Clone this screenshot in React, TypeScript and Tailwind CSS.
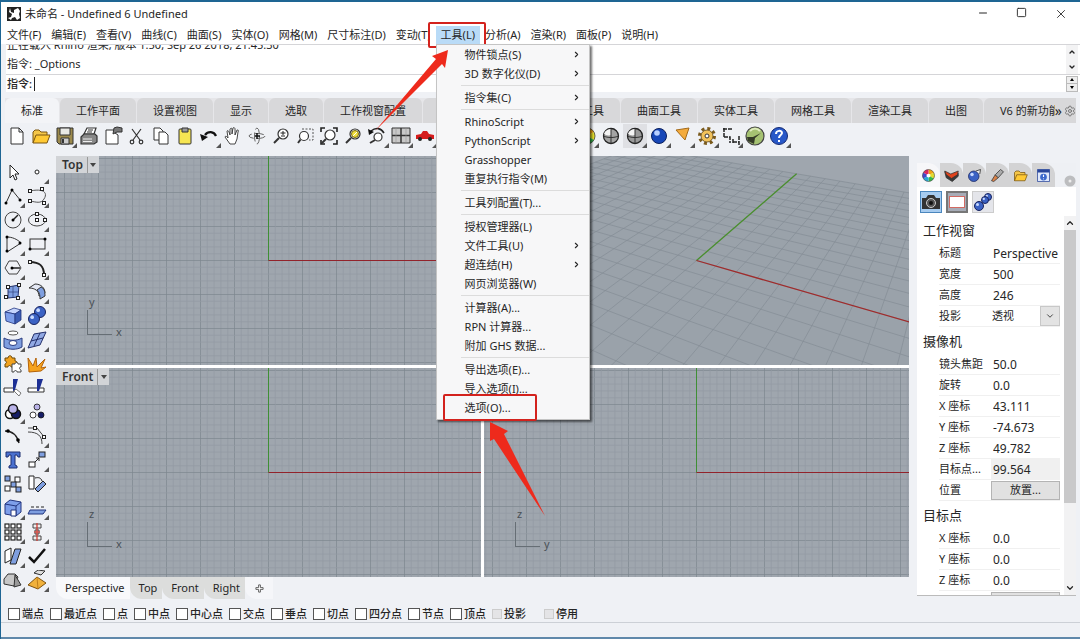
import { useState, type ReactNode } from 'react';
import { ChevronDown, ChevronRight, ChevronUp, Minus, Settings, Square, X } from 'lucide-react';

const INK = '#333';
const BLUE = '#7f9fe0';
const NAVY = '#1c2f94';

/* Small marks shared by the tool icons */
const Dot = ({ x, y }: { x: number; y: number }) => (
  <rect x={x - 1.5} y={y - 1.5} width="3" height="3" fill="#fff" stroke="#222" strokeWidth="1" />
);
const Ball = ({ x, y, r }: { x: number; y: number; r: number }) => (
  <g>
    <circle cx={x} cy={y} r={r} fill="#3b62c4" stroke="#18235e" strokeWidth="1" />
    <circle cx={x - r / 3} cy={y - r / 3} r={r / 3} fill="#c9daff" />
  </g>
);
const Wire = ({ fill }: { fill: string }) => (
  <g>
    <circle cx="10" cy="10" r="7.5" fill={fill} stroke="#222" strokeWidth="1.3" />
    <path d="M3 8c1-4 5-5 7-5v6c-3 1-5 0-7-1z" fill="#f4f4f4" />
    <path d="M2.500 10c4 2 11 2 15 0M10 2.500v15" fill="none" stroke="#333" />
  </g>
);
const Lens = ({ x = 12, y = 8, r = 5 }: { x?: number; y?: number; r?: number }) => (
  <g fill="#fff" stroke={INK}>
    <path d={`M${x - r + 1} ${y + r - 1}L3 17`} strokeWidth="2" />
    <circle cx={x} cy={y} r={r} strokeWidth="1.200" />
  </g>
);

type Tool = { name: string; icon: ReactNode; more?: boolean; on?: boolean };

const fileTools: Tool[] = [
  { name: '新建', icon: <path d="M4 2h8l4 4v12H4zM12 2v4h4" fill="#fff" stroke={INK} /> },
  {
    name: '打开',
    icon: <g stroke="#7a5510"><path d="M2 17V6l2-2h4l2 2h6v3" fill="#f5c648" /><path d="M2 17l3-8h14l-3 8z" fill="#ffc933" /></g>,
  },
  {
    name: '保存',
    more: true,
    icon: <g stroke={INK}><path d="M2 2h16v16H4l-2-2z" fill="#9c8a4d" /><path d="M5 2h10v7H5z" fill="#e8e8e4" /><path d="M6 12h8v6H6z" fill="#ccc" /><path d="M8 13v4" strokeWidth="2" /></g>,
  },
  {
    name: '打印',
    icon: <g stroke={INK} strokeWidth="1.200"><path d="M5 8l3-6h9l-2 6z" fill="#fff" /><path d="M2 11l3-3h11l2 2v6l-3 2H2z" fill="#888" /><path d="M4 13h9M4 15.500h9" stroke="#eee" /><path d="M9 4h5M8 6h5" /></g>,
  },
  { name: '属性', icon: <g stroke={INK}><path d="M3 4h9v3l3 2v9H3z" fill="#fff" /><path d="M11 2l3-1 5 1v4h-5l-4 2z" fill="#777" /></g> },
  { name: '剪切', icon: <g fill="none" stroke={INK} strokeWidth="1.200"><path d="M5 3l8 11M14 3L6 14" /><circle cx="5" cy="16" r="1.800" /><circle cx="14" cy="16" r="1.800" /></g> },
  { name: '复制', icon: <g fill="#fff" stroke={INK}><path d="M3 2h6l3 3v9H3z" /><path d="M8 6h6l3 3v9H8z" /></g> },
  { name: '粘贴', icon: <g stroke={INK}><rect x="4" y="3" width="12" height="15" rx="1" fill="#f7e652" /><path d="M7 2h6v4H7z" fill="#999" /></g> },
  { name: '撤销', more: true, icon: <g><path d="M6 9c3-4 9-4 11 1" fill="none" stroke="#111" strokeWidth="2.200" /><path d="M1 8l2 7 6-4z" fill="#111" /></g> },
  {
    name: '平移',
    icon: <path d="M7 18l-5-7c0-1 2-1 3 1L4 5c1-1 2 0 3 4V3c1-1 2-1 2 0v5l1-6c1-1 2 0 2 1v6l2-5c1 0 2 0 1 2l-1 7-2 5z" fill="#fff" stroke={INK} strokeWidth=".9" />,
  },
  { name: '旋转视图', icon: <g fill="none" stroke="#666"><ellipse cx="10" cy="10" rx="8" ry="2.500" strokeDasharray="9 3" /><ellipse cx="10" cy="10" rx="2.500" ry="8" strokeDasharray="9 3" /><path d="M8 10h5M10 7v6" stroke="#111" strokeWidth="1.500" /></g> },
  { name: '动态缩放', icon: <g><Lens /><path d="M9.500 7h5M12 5v4M10 10h4" stroke="#222" /></g> },
  { name: '框选缩放', icon: <g><Lens x={9} y={10} r={4.500} /><path d="M7 3h11v11h-4" fill="none" stroke="#555" strokeDasharray="2 1.500" /></g> },
  { name: '缩放至最大范围', icon: <g><Lens x={11} y={9} r={5} /><path d="M2 6V2h4M14 2h4v4M18 14v4h-4M6 18H2v-4" fill="none" stroke="#222" strokeWidth="1.600" /></g> },
  { name: '缩放至选取物件', icon: <g><Lens /><circle cx="12" cy="8" r="3.500" fill="#f1df3b" stroke="#7a6b12" /><path d="M10 10l4-4" stroke="#fff" /></g> },
  { name: '复原视图', more: true, icon: <g><Lens x={11} y={11} r={4} /><path d="M4 5c5-4 10-3 13 2" fill="none" stroke="#222" strokeWidth="1.600" /><path d="M1 3l1 6 5-3z" fill="#111" /></g> },
  { name: '四个工作视窗', more: true, icon: <g><path d="M1 2h18v15H1z" fill="#c8c8c8" stroke="#333" /><path d="M10 2v15M1 9.500h18" stroke="#333" strokeWidth="1.500" /><path d="M5 2v15M15 2v15" stroke="#999" strokeWidth=".6" /></g> },
  { name: '右视图', more: true, icon: <g><path d="M1 9l5-1 2-3h4l2 3 5 1v4H1z" fill="#d51c1c" /><circle cx="5" cy="13" r="2" fill="#222" /><circle cx="15" cy="13" r="2" fill="#222" /></g> },
];

const renderTools: Tool[] = [
  { name: '材质', more: true, icon: <ColorWheel /> },
  { name: '着色', icon: <Wire fill="#a4a4a4" /> },
  { name: '线框', more: true, on: true, icon: <Wire fill="#9a9a9a" /> },
  { name: '渲染', more: true, icon: <g><circle cx="10" cy="10" r="7.500" fill="#1747b8" stroke="#0b1f5c" /><circle cx="8" cy="7" r="2.800" fill="#b9d0ff" /></g> },
  { name: '聚光灯', more: true, icon: <path d="M3 4l13-2-4 12z" fill="#f4ab3d" stroke="#a36a1b" /> },
  { name: '选项', more: true, icon: <g><circle cx="10" cy="10" r="7.500" fill="none" stroke="#7a5a1c" strokeWidth="3" strokeDasharray="3 2.900" /><circle cx="10" cy="10" r="6" fill="#f2c25a" stroke="#5c4414" strokeWidth=".8" /><circle cx="10" cy="10" r="2" fill="#fff" stroke="#333" /></g> },
  { name: '尺寸', more: true, icon: <path d="M3 2v9M2 3h9M3 11h6v6M12 16h6M18 10v9M12 13v5" fill="none" stroke="#222" strokeWidth="1.500" strokeDasharray="4 1" /> },
  { name: 'Grasshopper', icon: <g><circle cx="10" cy="10" r="9" fill="#a5c272" stroke="#444" strokeWidth="1.200" /><path d="M2 11l6 0 8-4-6 5-1 6-6-3z" fill="#343b27" /><path d="M5 5c3-3 7-3 10 0" stroke="#e0edbf" strokeWidth="2" fill="none" /></g> },
  { name: '说明', more: true, icon: <g><circle cx="10" cy="10" r="8.500" fill="#2858c8" stroke="#152a72" /><path d="M7 8c0-4 6-4 6-1 0 2-3 2-3 5M10 14v2" stroke="#fff" strokeWidth="2" fill="none" /></g> },
];

const sideTools: Tool[] = [
  { name: '取消选取', icon: <path d="M7 3v13l3-3 2 5 2-1-2-5h4z" fill="#fff" stroke="#222" /> },
  { name: '点', more: true, icon: <circle cx="10" cy="10" r="2" fill="#fff" stroke="#222" /> },
  { name: '多重直线', more: true, icon: <g><path d="M3 17L9 4l9 11" fill="none" stroke="#333" /><circle cx="3" cy="17" r="1.500" /><circle cx="9" cy="4" r="1.500" /><circle cx="17" cy="14" r="1.500" /></g> },
  { name: '控制点曲线', more: true, icon: <g><path d="M3 5c14-3 18 2 14 8-3 5-8 3-14 2" fill="none" stroke="#555" /><Dot x={3} y={5} /><Dot x={15} y={3} /><Dot x={3} y={15} /><Dot x={17} y={17} /></g> },
  { name: '圆', more: true, icon: <g><circle cx="10" cy="10" r="8" fill="none" stroke="#444" /><path d="M10 10l5-5" stroke="#222" strokeWidth="1.500" /><circle cx="10" cy="10" r="1.500" /></g> },
  { name: '椭圆', more: true, icon: <g><ellipse cx="10" cy="10" rx="8.500" ry="6" fill="none" stroke="#444" /><Dot x={10} y={10} /><Dot x={10} y={4} /><Dot x={18} y={10} /></g> },
  { name: '圆弧', more: true, icon: <g><path d="M4 3v15L18 9C14 5 9 3 4 3z" fill="none" stroke="#333" /><circle cx="4" cy="3" r="1.500" /><circle cx="4" cy="17" r="1.500" /><circle cx="17" cy="9" r="1.500" /></g> },
  { name: '矩形', more: true, icon: <g><rect x="3" y="5" width="15" height="10" fill="none" stroke="#333" /><circle cx="3" cy="15" r="1.500" /><circle cx="18" cy="5" r="1.500" /></g> },
  { name: '多边形', more: true, icon: <g><path d="M6 3h8l4 7-4 6H6l-4-6z" fill="none" stroke="#444" /><path d="M9 10h8" stroke="#222" strokeWidth="1.500" /><circle cx="9" cy="10" r="1.500" /></g> },
  { name: '曲线圆角', more: true, icon: <g><path d="M3 4c9 0 14 3 14 13" fill="none" stroke="#222" strokeWidth="2" /><Dot x={3} y={4} /><Dot x={17} y={17} /></g> },
  { name: '曲面', more: true, icon: <g><path d="M5 5l11-2-1 12-10 1z" fill={BLUE} stroke="#26356e" /><path d="M5 10h11M10 4v12" stroke="#26356e" strokeWidth=".6" /><Dot x={5} y={5} /><Dot x={16} y={3} /><Dot x={15} y={16} /><Dot x={3} y={15} /></g> },
  { name: '曲面圆角', more: true, icon: <g stroke="#333"><path d="M2 6l6-4c6 0 10 4 10 9l-6 3c0-5-4-8-10-8z" fill="#e4e8f4" /><path d="M10 8c2 2 3 4 3 9l5-3c0-5-1-8-4-9z" fill={BLUE} /></g> },
  { name: '立方体', more: true, icon: <g stroke="#22357f" strokeWidth=".8"><path d="M2 6l9-4 7 2-6 4z" fill="#c5d5fd" /><path d="M2 6l10 2v10L3 15z" fill="#7d9eea" /><path d="M12 8l6-4v10l-6 4z" fill="#3b5cb3" /></g> },
  { name: '布尔运算联集', more: true, icon: <g><Ball x={13} y={6} r={5.500} /><Ball x={7} y={13} r={5.500} /></g> },
  { name: '投影曲线', more: true, icon: <g stroke="#2a3c80"><ellipse cx="10" cy="3" rx="5" ry="2" fill="#fff" stroke="#555" /><path d="M1 8c5 3 13 3 18 0v9c-5 3-13 3-18 0z" fill={BLUE} /><ellipse cx="10" cy="13" rx="4" ry="2.500" fill="#fff" /></g> },
  { name: '网格', more: true, icon: <g stroke="#24306b"><path d="M7 4l12-2-6 13-12 3z" fill="#91a9e4" /><path d="M4 11l12-3M13 3L7 16" /></g> },
  { name: '组合', icon: <g><path d="M2 4h3c0-3 4-3 4 0h3v3c3 0 3 4 0 4v2H8c0-2-3-2-3 0H2v-3c2-1 2-3 0-3z" fill="#f0a21f" stroke="#6b480b" /><path d="M9 10h3c0-2 3-2 3 0h3v3c-2 0-2 2 0 3v2h-4c0-2-3-2-3 0H9z" fill="#fff" stroke="#444" /></g> },
  { name: '炸开', icon: <path d="M2 18L1 4l5 8 3-8 1 9 8-8-4 9 5-1-5 4z" fill="#f5a21e" stroke="#b4630a" /> },
  { name: '修剪', icon: <g><path d="M1 10h10v4H1z" fill="#fff" stroke="#333" /><path d="M10 1h5l-3 11-2 1z" fill={NAVY} /><path d="M11 13l5 5 2-3-5-4z" fill="#fff" stroke="#777" /></g> },
  { name: '分割', icon: <g><path d="M1 10h16v4H1z" fill="#fff" stroke="#333" /><path d="M10 1h6l-4 12h-2z" fill={NAVY} /></g> },
  { name: '群组', more: true, icon: <g stroke="#111" strokeWidth="1.500"><circle cx="7" cy="12" r="4.500" fill="#fff" /><circle cx="13" cy="12" r="4.500" fill="#161d66" /><circle cx="10" cy="7" r="4.500" fill="#b9b3e8" /></g> },
  { name: '取消群组', icon: <g stroke="#111" strokeWidth=".8"><circle cx="10" cy="5" r="3" fill="#b9b3e8" /><circle cx="6" cy="13" r="3" fill="#fff" /><circle cx="14" cy="13" r="3" fill="#161d66" /></g> },
  { name: '编辑点', icon: <g><path d="M2 5c8 0 12 4 14 12" fill="none" stroke="#222" strokeWidth="1.500" /><circle cx="5" cy="5" r="1.800" /><circle cx="15" cy="14" r="1.800" /></g> },
  { name: '控制点', more: true, icon: <g><path d="M1 6c10 0 14 4 14 12M1 2h9l8 10" fill="none" stroke="#444" /><Dot x={8} y={2} /><Dot x={17} y={11} /></g> },
  { name: '文字', icon: <path d="M3 2h14v5h-2l-1-2h-2v10l2 1v2H6v-2l2-1V5H6L5 7H3z" fill="#4a70cf" stroke="#1d2f70" /> },
  { name: '移动', more: true, icon: <g stroke="#222"><rect x="12" y="2" width="6" height="5" fill={BLUE} /><rect x="2" y="12" width="6" height="5" fill="#fff" /><path d="M8 12l4-4M9 8h3v3" fill="none" /></g> },
  { name: '复制物件', icon: <g stroke="#222"><rect x="2" y="2" width="5" height="5" fill={BLUE} /><rect x="12" y="3" width="5" height="5" fill="#fff" /><rect x="8" y="8" width="5" height="5" fill={BLUE} /><rect x="2" y="12" width="5" height="5" fill="#fff" /><rect x="13" y="13" width="5" height="5" fill={BLUE} /></g> },
  { name: '旋转', icon: <g stroke="#222"><path d="M2 2h5v13H2z" fill="#fff" /><path d="M8 4c4-1 6 0 7 3" fill="none" /><path d="M8 15l8-8 3 3-8 8z" fill={BLUE} /></g> },
  { name: '实体编辑', more: true, icon: <g stroke="#22357f"><path d="M2 6l5-4 11 2v10l-5 4-11-2z" fill="#7d9eea" /><path d="M2 6l11 2v10M13 8l5-4" fill="none" /><path d="M8 12h5v6H8z" fill="#fff" /></g> },
  { name: '平面', more: true, icon: <g><path d="M3 12h16l-3 4H1z" fill={BLUE} stroke="#22357f" /><path d="M4 9h14" stroke="#222" strokeDasharray="3 2" /></g> },
  {
    name: '阵列',
    more: true,
    icon: <g fill="#fff" stroke="#222" strokeWidth="1.200">{[2, 8, 14].map(x => [2, 8, 14].map(y => <rect key={`${x}-${y}`} x={x} y={y} width="4" height="4" />))}</g>,
  },
  { name: '对齐', more: true, icon: <g><g fill="#eee" stroke="#444"><path d="M6 2h8v4H6zM8 8h4v4H8zM6 14h8v4H6z" /></g><path d="M10 1v18M7 10h6" stroke="#d0342c" strokeWidth="1.200" /></g> },
  { name: '变形', more: true, icon: <g stroke="#222"><path d="M2 5l6-3v12l-6 3z" fill="#fff" /><path d="M12 3h6l-5 15H7z" fill={BLUE} /></g> },
  { name: '检查', more: true, icon: <path d="M2 11l5 5L18 3" fill="none" stroke="#111" strokeWidth="2.500" /> },
  { name: '倒角', more: true, icon: <g stroke="#333"><path d="M1 9l4-5h7l3 3-4 9-10-2z" fill="#c7c7c7" /><path d="M12 5l6 10-7 2z" fill="#999" /></g> },
  { name: '渲染工具', more: true, icon: <g><path d="M1 15l9-8 9 6-8 6z" fill="#f1b13b" stroke="#7d5210" /><path d="M10 7l1 12" stroke="#c07f1c" /><path d="M7 3l4-3 7 1-4 4z" fill="#ddd" stroke="#333" /></g> },
];

function ColorWheel() {
  return (
    <g>
      <path d="M10 10L10 2A8 8 0 0 1 17 6z" fill="#f2a313" />
      <path d="M10 10L17 6A8 8 0 0 1 17 14z" fill="#e3dc2b" />
      <path d="M10 10L17 14A8 8 0 0 1 10 18z" fill="#35b84a" />
      <path d="M10 10L10 18A8 8 0 0 1 3 14z" fill="#28a8d8" />
      <path d="M10 10L3 14A8 8 0 0 1 3 6z" fill="#4446c9" />
      <path d="M10 10L3 6A8 8 0 0 1 10 2z" fill="#dc2560" />
      <circle cx="10" cy="10" r="8" fill="none" stroke="#444" strokeWidth=".8" />
      <circle cx="10" cy="10" r="2.500" fill="#fff" />
    </g>
  );
}

function ToolButton({ tool }: { tool: Tool }) {
  return (
    <button aria-label={tool.name} className={`relative flex size-6 items-center justify-center ${tool.on ? 'bg-[#dfe0e4]' : ''}`}>
      <svg viewBox="0 0 20 20" className="size-5">{tool.icon}</svg>
      {tool.more && (
        <svg viewBox="0 0 5 5" className="absolute right-0 bottom-0 size-[5px]"><path d="M5 0v5H0z" fill="#555" /></svg>
      )}
    </button>
  );
}

const menusLeft = ['文件(F)', '编辑(E)', '查看(V)', '曲线(C)', '曲面(S)', '实体(O)', '网格(M)', '尺寸标注(D)', '变动(T)'];
const menusRight = ['分析(A)', '渲染(R)', '面板(P)', '说明(H)'];

const toolsMenu: { label: string; sub?: boolean }[][] = [
  [{ label: '物件锁点(S)', sub: true }, { label: '3D 数字化仪(D)', sub: true }],
  [{ label: '指令集(C)', sub: true }],
  [{ label: 'RhinoScript', sub: true }, { label: 'PythonScript', sub: true }, { label: 'Grasshopper' }, { label: '重复执行指令(M)' }],
  [{ label: '工具列配置(T)...' }],
  [{ label: '授权管理器(L)' }, { label: '文件工具(U)', sub: true }, { label: '超连结(H)', sub: true }, { label: '网页浏览器(W)' }],
  [{ label: '计算器(A)...' }, { label: 'RPN 计算器...' }, { label: '附加 GHS 数据...' }],
  [{ label: '导出选项(E)...' }, { label: '导入选项(I)...' }, { label: '选项(O)...' }],
];

function ToolsMenu() {
  return (
    <div className="absolute top-full left-0 z-20 w-[154px] border border-[#c4c4c4] bg-[#f7f7f8] pb-[2px] shadow-[2px_2px_2px_rgba(0,0,0,0.55)]">
      {toolsMenu.map((group, i) => (
        <div key={i}>
          {i > 0 && <div className="my-[2px] ml-6 h-px bg-[#dcdcdc]" />}
          {group.map(item => (
            <div key={item.label} className="relative">
              <button className="flex h-[19px] w-full items-center justify-between pr-2 pl-7 whitespace-nowrap">
                {item.label}
                {item.sub && <ChevronRight className="size-[9px]" strokeWidth={3} />}
              </button>
              {item.label === '选项(O)...' && (
                <span className="pointer-events-none absolute -inset-y-1 right-[52px] left-[6px] rounded-xs border-2 border-[#d3221d]" />
              )}
            </div>
          ))}
        </div>
      ))}
    </div>
  );
}

/* Orthographic view: 5-unit major lines every 34px, centred on the origin */
function OrthoGrid({ up, across }: { up: string; across: string }) {
  const lines: ReactNode[] = [];
  for (let i = -32; i <= 32; i++) {
    const p = i * 6.8;
    const c = i % 5 === 0 ? '#7d868e' : '#939ba3';
    lines.push(<line key={`v${i}`} x1={p} x2={p} y1="-300" y2="300" stroke={c} strokeWidth=".7" />);
    lines.push(<line key={`h${i}`} y1={p} y2={p} x1="-300" x2="300" stroke={c} strokeWidth=".7" />);
  }
  return (
    <>
      <svg className="absolute inset-0 size-full" aria-hidden="true">
        <svg x="50%" y="50%" className="overflow-visible">
          {lines}
          <path d="M0 0V-600" stroke="#3f8f35" />
          <path d="M0 0H900" stroke="#92232b" />
        </svg>
      </svg>
      <div className="absolute bottom-[22px] left-[31px] text-[#4a5157]">
        <div className="pl-[2px] leading-4">{up}</div>
        <div className="flex items-end gap-1">
          <span className="mb-2 size-[25px] border-b border-l border-[#666e75]" />
          <span className="leading-[22px]">{across}</span>
        </div>
      </div>
    </>
  );
}

/* Camera at (43.111, -74.673, 49.782), looking at the origin with a 50mm lens */
function project(x: number, y: number) {
  const depth = 99.564 - 0.433 * x + 0.75 * y;
  return `${((435 * (0.866 * x + 0.5 * y)) / depth).toFixed(1)} ${((-435 * (-0.25 * x + 0.433 * y)) / depth).toFixed(1)}`;
}

function PerspectiveGrid() {
  const steps = Array.from({ length: 29 }, (_, i) => -70 + i * 5);
  return (
    <svg className="absolute inset-0 size-full" aria-hidden="true">
      <svg x="50%" y="50%" className="overflow-visible">
        <path d={`M${project(-70, -70)}L${project(-70, 70)}L${project(70, 70)}L${project(70, -70)}z`} fill="#9aa2aa" />
        {steps.map(s => (
          <path key={s} d={`M${project(s, -70)}L${project(s, 70)}M${project(-70, s)}L${project(70, s)}`} stroke="#848c95" strokeWidth=".7" />
        ))}
        <path d={`M0 0L${project(0, 70)}`} stroke="#4a8f2e" strokeWidth="1.3" />
        <path d={`M0 0L${project(70, 0)}`} stroke="#a02b2b" strokeWidth="1.3" />
      </svg>
    </svg>
  );
}

function Viewport({ title, children }: { title: string; children: ReactNode }) {
  return (
    <section className="relative overflow-hidden bg-[#9fa6ae]">
      {children}
      <div className="relative inline-flex h-[17px] items-center bg-[#d2d4d7] pl-[6px] text-xs font-semibold text-[#333]">
        {title}
        <button aria-label={`${title} 菜单`} className="ml-1 flex h-4 w-3 items-center justify-center border-l border-[#999]">
          <svg viewBox="0 0 6 4" className="h-1 w-[6px]"><path d="M0 0h6L3 4z" fill="#444" /></svg>
        </button>
      </div>
    </section>
  );
}

type Field = { label: string; value: string; kind?: 'select' | 'button' | 'readonly' };

const properties: { title: string; fields: Field[] }[] = [
  {
    title: '工作视窗',
    fields: [
      { label: '标题', value: 'Perspective' },
      { label: '宽度', value: '500' },
      { label: '高度', value: '246' },
      { label: '投影', value: '透视', kind: 'select' },
    ],
  },
  {
    title: '摄像机',
    fields: [
      { label: '镜头焦距', value: '50.0' },
      { label: '旋转', value: '0.0' },
      { label: 'X 座标', value: '43.111' },
      { label: 'Y 座标', value: '-74.673' },
      { label: 'Z 座标', value: '49.782' },
      { label: '目标点...', value: '99.564', kind: 'readonly' },
      { label: '位置', value: '放置...', kind: 'button' },
    ],
  },
  {
    title: '目标点',
    fields: [
      { label: 'X 座标', value: '0.0' },
      { label: 'Y 座标', value: '0.0' },
      { label: 'Z 座标', value: '0.0' },
    ],
  },
];

function FieldRow({ id, field }: { id: string; field: Field }) {
  return (
    <div className="ml-5 flex h-[21px] items-center border-b border-[#f0f0f0]">
      <label htmlFor={id} className="w-[52px] shrink-0 whitespace-nowrap">{field.label}</label>
      {field.kind === 'select' && (
        <div className="relative h-full min-w-0 flex-1">
          <select id={id} className="h-full w-full appearance-none pl-px outline-none">
            <option>{field.value}</option>
          </select>
          <span className="pointer-events-none absolute inset-y-0 right-0 flex w-5 items-center justify-center border border-[#c8c8c8] bg-[#e3e3e3]">
            <ChevronDown className="size-[10px]" />
          </span>
        </div>
      )}
      {field.kind === 'button' && (
        <button id={id} className="h-[19px] flex-1 border border-[#b4b4b4] bg-[#e1e1e1]">{field.value}</button>
      )}
      {(!field.kind || field.kind === 'readonly') && (
        <input
          id={id}
          defaultValue={field.value}
          readOnly={field.kind === 'readonly'}
          className={`h-full min-w-0 flex-1 pl-[2px] text-xs outline-none ${field.kind === 'readonly' ? 'bg-[#f0f0f0]' : ''}`}
        />
      )}
    </div>
  );
}

const panelTabs: { name: string; icon: ReactNode }[] = [
  { name: '属性', icon: <ColorWheel /> },
  { name: '图层', icon: <g stroke="#333"><path d="M1 5l7 5 11-3v4l-8 7-8-5z" fill="#3a3a3a" /><path d="M1 4l8 4 10-4-1 5-8 5-7-5z" fill="#e0431c" /></g> },
  { name: '渲染', icon: <g><Ball x={9} y={11} r={7} /><path d="M12 4l6-2-1 6" fill="#eee" stroke="#222" /></g> },
  { name: '材质', icon: <g stroke="#333"><path d="M2 17l5-8 4 4-6 5z" fill="#d9824a" /><path d="M7 9l7-7 4 3-7 8z" fill="#aaa" /></g> },
  { name: '文件夹', icon: fileTools[1].icon },
  { name: '说明', icon: <g><path d="M2 2h16v16H2z" fill="#dfe8fb" stroke="#29469b" /><path d="M2 2h16v4H2z" fill="#29469b" /><circle cx="10" cy="12" r="4.500" fill="#3b68cc" /><path d="M10 9v3M10 14v1" stroke="#fff" strokeWidth="1.500" /></g> },
];

function PropertiesPanel() {
  return (
    <aside className="mt-[7px] mr-1 mb-2 ml-2 flex w-[159px] shrink-0 flex-col">
      <div className="flex h-6 shrink-0 items-center bg-[#eef0f4]">
        {panelTabs.map((tab, i) => (
          <button
            key={tab.name}
            aria-label={tab.name}
            className={`flex h-full w-[23px] items-center justify-center rounded-tr-xl ${i === 0 ? 'bg-[#f7f7f9]' : 'bg-[#d3d3d4]'}`}
          >
            <svg viewBox="0 0 20 20" className="size-[15px]">{tab.icon}</svg>
          </button>
        ))}
        <button aria-label="面板选项" className="ml-auto self-end">
          <svg viewBox="0 0 12 12" className="size-3"><circle cx="6" cy="6" r="5.500" fill="#bcbdbf" /><circle cx="6" cy="6" r="1.500" fill="#eee" /></svg>
        </button>
      </div>
      <div className="flex min-h-0 flex-1 flex-col overflow-hidden border-b border-[#bbb] bg-white">
        <div className="flex h-[29px] shrink-0 items-center gap-1 pl-[3px]">
          <button aria-label="摄像机" className="flex size-[22px] items-center justify-center border border-[#4a86bd] bg-[#a6cbef]">
            <svg viewBox="0 0 20 20" className="size-5"><path d="M1 6h4l2-3h6l2 3h4v11H1z" fill="#333" /><circle cx="10" cy="11" r="4.500" fill="#555" stroke="#ccc" /><circle cx="10" cy="11" r="2" fill="#111" /></svg>
          </button>
          <button aria-label="显示" className="flex size-[22px] items-center justify-center border-2 border-[#777] bg-[#a7acb7]">
            <span className="h-3 w-4 border border-[#d26a62] bg-white" />
          </button>
          <button aria-label="材质" className="flex size-[22px] items-center justify-center border border-[#ccc] bg-[#e4e5ea]">
            <svg viewBox="0 0 20 20" className="size-5"><Ball x={15} y={5} r={3.5} /><Ball x={12} y={8} r={3.5} /><Ball x={6} y={14} r={4.5} /></svg>
          </button>
        </div>
        <div className="flex min-h-0 flex-1">
          <div className="min-w-0 flex-1 overflow-hidden pl-[2px]">
            {properties.map((section, s) => (
              <div key={section.title}>
                <h2 className="flex h-[27px] items-center pl-1 text-[13px]">{section.title}</h2>
                {section.fields.map(field => (
                  <FieldRow key={field.label} id={`f${s}-${field.label}`} field={field} />
                ))}
              </div>
            ))}
            <div className="mt-px ml-[72px] h-[19px] border border-[#b4b4b4] bg-[#e1e1e1]" />
          </div>
          <div className="ml-1 flex w-3 flex-col items-center bg-[#f2f2f3]">
            <ChevronUp className="my-[2px] size-[10px] shrink-0" strokeWidth={3} />
            <div className="h-[72%] w-full bg-[#c9c9ca]" />
            <ChevronDown className="mt-auto mb-[2px] size-[10px] shrink-0" strokeWidth={3} />
          </div>
        </div>
      </div>
    </aside>
  );
}

const tabs = ['标准', '工作平面', '设置视图', '显示', '选取', '工作视窗配置', '可见性', '变动', '曲线工具', '曲面工具', '实体工具', '网格工具', '渲染工具', '出图', 'V6 的新功能'];
const snaps = ['端点', '最近点', '点', '中点', '中心点', '交点', '垂点', '切点', '四分点', '节点', '顶点'];

export default function App() {
  const [active, setActive] = useState('标准');
  const [view, setView] = useState('Perspective');

  return (
    <div className="relative flex h-screen flex-col overflow-hidden border-t-2 border-l border-[#1e6593] bg-[#eff1f5] font-['Noto_Sans','Noto_Sans_CJK_SC',sans-serif] text-[11px] leading-4 text-[#262626]">
      {/* Title bar */}
      <header className="flex h-6 shrink-0 items-center bg-white pl-[6px]">
        <svg viewBox="0 0 14 14" className="size-[14px]">
          <path d="M0 0h14v14H0z" fill="#222" />
          <path d="M3 1l1 4 3 1 0-3 4-2 2 3-1 3 1 4-3 2-2-3-3 1-1 2-3-2 3-1 1-3-3-2z" fill="#fff" />
        </svg>
        <h1 className="ml-1">未命名 - Undefined 6 Undefined</h1>
        <div className="ml-auto flex">
          <button aria-label="最小化" className="flex w-[39px] justify-center"><Minus className="size-3" /></button>
          <button aria-label="最大化" className="flex w-[39px] justify-center"><Square className="size-[11px]" /></button>
          <button aria-label="关闭" className="flex w-[39px] justify-center"><X className="size-[14px]" strokeWidth={1.5} /></button>
        </div>
      </header>

      {/* Menu bar */}
      <nav className="flex h-[18px] shrink-0 bg-white pl-px whitespace-nowrap">
        {menusLeft.map(m => <button key={m} className="px-[5px]">{m}</button>)}
        <div className="relative">
          <span className="absolute -inset-y-1 -right-[6px] -left-2 z-20 rounded-xs border-2 border-[#d3221d] bg-white" />
          <button className="relative z-30 h-full bg-[#b9dbf7] px-[5px]">工具(L)</button>
          <ToolsMenu />
        </div>
        {menusRight.map(m => <button key={m} className="px-[5px]">{m}</button>)}
      </nav>

      {/* Command history and prompt */}
      <div className="ml-[5px] flex h-[31px] shrink-0 border-y border-[#d5d5d8] bg-white">
        <div className="flex flex-1 flex-col justify-end overflow-hidden pl-px">
          <p className="leading-[18px]">正在载入 Rhino 渲染, 版本 1.50, Sep 26 2018, 21:45:30</p>
          <p className="shrink-0 leading-5">指令: _Options</p>
        </div>
        <div className="mr-[2px] flex w-3 flex-col items-center justify-around bg-[#f3f3f4]">
          <ChevronUp className="size-2" strokeWidth={4} />
          <ChevronDown className="size-2" strokeWidth={4} />
        </div>
      </div>
      <div className="ml-[5px] flex h-[17px] shrink-0 items-center bg-white pl-px">
        <label htmlFor="command" className="font-medium">指令:</label>
        <span className="ml-[2px] h-[14px] w-px bg-[#222]" />
        <input id="command" className="h-full flex-1 outline-none" />
        <div className="mr-[2px] flex h-4 w-3 flex-col border border-[#bbb] bg-[#eee]">
          <button aria-label="上一个" className="flex flex-1 items-center justify-center border-b border-[#bbb]"><svg viewBox="0 0 4 3" className="w-1"><path d="M2 0l2 3H0z" /></svg></button>
          <button aria-label="下一个" className="flex flex-1 items-center justify-center"><svg viewBox="0 0 4 3" className="w-1"><path d="M0 0h4L2 3z" /></svg></button>
        </div>
      </div>

      {/* Toolbar tabs */}
      <div className="mt-[6px] mr-1 ml-1 flex h-[25px] shrink-0 items-stretch">
        <div className="flex min-w-0 flex-1 gap-px overflow-hidden bg-[#e6e6e9] whitespace-nowrap">
          {tabs.map(t => (
            <button
              key={t}
              onClick={() => setActive(t)}
              className={`shrink-0 rounded-t-md px-4 ${t === active ? 'bg-[#f3f4f7]' : 'bg-[#d8d8da]'}`}
            >
              {t}
            </button>
          ))}
        </div>
        <div className="flex items-center gap-[2px] bg-[#d8d8da]">
          <span className="text-sm">»</span>
          <Settings className="size-3 text-[#777]" />
        </div>
      </div>
      <div className="flex h-[26px] shrink-0 items-center pl-1">
        {fileTools.map(t => <ToolButton key={t.name} tool={t} />)}
        <div className="ml-[138px] flex">
          {renderTools.map(t => <ToolButton key={t.name} tool={t} />)}
        </div>
      </div>

      {/* Work area */}
      <main className="flex min-h-0 flex-1 pt-[7px]">
        <div className="grid w-[55px] shrink-0 grid-cols-[24px_24px] content-start pt-1">
          {sideTools.map(t => <ToolButton key={t.name} tool={t} />)}
        </div>
        <div className="flex min-w-0 flex-1 flex-col pb-1">
          <div className="grid min-h-0 flex-1 grid-cols-2 grid-rows-2 gap-[3px] bg-white">
            <Viewport title="Top"><OrthoGrid up="y" across="x" /></Viewport>
            <Viewport title="Perspective"><PerspectiveGrid /></Viewport>
            <Viewport title="Front"><OrthoGrid up="z" across="x" /></Viewport>
            <Viewport title="Right"><OrthoGrid up="z" across="y" /></Viewport>
          </div>
          <div className="flex h-[23px] shrink-0 items-stretch pb-px">
            {['Perspective', 'Top', 'Front', 'Right'].map(v => (
              <button
                key={v}
                onClick={() => setView(v)}
                className={`rounded-bl-xl pr-[5px] pl-[9px] ${v === view ? 'bg-[#f8f9fb]' : 'bg-[#dcdddc]'}`}
              >
                {v}
              </button>
            ))}
            <button aria-label="新增工作视窗" className="flex w-7 items-center justify-center rounded-bl-xl bg-[#f5f6f9]">
              <svg viewBox="0 0 10 10" className="size-[9px]"><path d="M4 1h2v3h3v2H6v3H4V6H1V4h3z" fill="#fff" stroke="#555" /></svg>
            </button>
          </div>
        </div>
        <PropertiesPanel />
      </main>

      {/* Object snaps */}
      <div className="flex h-[18px] shrink-0 items-end gap-[6px] pl-[7px] font-medium">
        {snaps.map(s => (
          <label key={s} className="flex items-center gap-[2px] whitespace-nowrap">
            <input type="checkbox" className="size-3 appearance-none border border-[#555] bg-white" />
            {s}
          </label>
        ))}
        <label className="flex items-center gap-[2px]">
          <input type="checkbox" disabled className="size-[10px] appearance-none border border-[#ccc] bg-[#e4e4e6]" />
          投影
        </label>
        <label className="ml-3 flex items-center gap-[2px]">
          <input type="checkbox" disabled className="size-[10px] appearance-none border border-[#ccc] bg-[#e4e4e6]" />
          停用
        </label>
      </div>
      <footer className="h-[17px] shrink-0 border-t border-b-2 border-t-[#ccd0d6] border-b-[#5f88aa]" />

      {/* Callout arrows */}
      <svg className="pointer-events-none absolute top-0 left-0 z-40 h-[530px] w-[560px]" aria-hidden="true">
        <path d="M447 48L431 54l4 3-61 72 67-67 3 4z" fill="#ee2a1c" />
        <path d="M489 420l0 19 4-2 51 77-41-82 4-3z" fill="#ee2a1c" />
      </svg>
    </div>
  );
}
